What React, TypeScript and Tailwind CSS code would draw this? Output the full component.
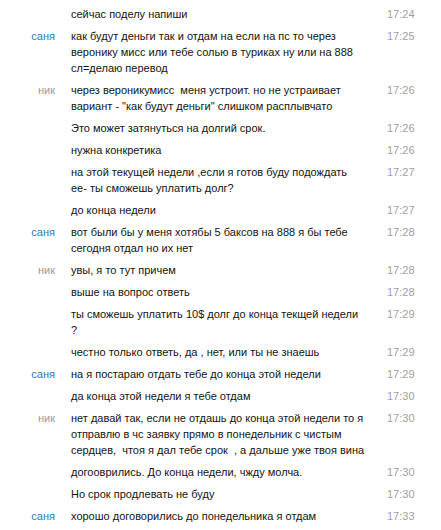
import React from "react";

type Row = { name?: string; who?: "s" | "n"; lines: string[]; time?: string };

const rows: Row[] = [
  { lines: ["сейчас поделу напиши"], time: "17:24" },
  {
    name: "саня",
    who: "s",
    lines: [
      "как будут деньги так и отдам на если на пс то через",
      "веронику мисс или тебе солью в туриках ну или на 888",
      "сл=делаю перевод",
    ],
    time: "17:25",
  },
  {
    name: "ник",
    who: "n",
    lines: [
      "через вероникумисс  меня устроит. но не устраивает",
      "вариант - \"как будут деньги\" слишком расплывчато",
    ],
    time: "17:26",
  },
  { lines: ["Это может затянуться на долгий срок."], time: "17:26" },
  { lines: ["нужна конкретика"], time: "17:26" },
  {
    lines: ["на этой текущей недели ,если я готов буду подождать", "ее- ты сможешь уплатить долг?"],
    time: "17:27",
  },
  { lines: ["до конца недели"], time: "17:27" },
  {
    name: "саня",
    who: "s",
    lines: ["вот были бы у меня хотябы 5 баксов на 888 я бы тебе", "сегодня отдал но их нет"],
    time: "17:28",
  },
  { name: "ник", who: "n", lines: ["увы, я то тут причем"], time: "17:28" },
  { lines: ["выше на вопрос ответь"], time: "17:28" },
  { lines: ["ты сможешь уплатить 10$ долг до конца текщей недели", "?"], time: "17:29" },
  { lines: ["честно только ответь, да , нет, или ты не знаешь"], time: "17:29" },
  { name: "саня", who: "s", lines: ["на я постараю отдать тебе до конца этой недели"], time: "17:29" },
  { lines: ["да конца этой недели я тебе отдам"], time: "17:30" },
  {
    name: "ник",
    who: "n",
    lines: [
      "нет давай так, если не отдашь до конца этой недели то я",
      "отправлю в чс заявку прямо в понедельник с чистым",
      "сердцев,  чтоя я дал тебе срок  , а дальше уже твоя вина",
    ],
    time: "17:30",
  },
  { lines: ["догооврились. До конца недели, чжду молча."], time: "17:30" },
  { lines: ["Но срок продлевать не буду"], time: "17:30" },
  { name: "саня", who: "s", lines: ["хорошо договорились до понедельника я отдам"], time: "17:33" },
];

export default function App() {
  return (
    <div
      className="w-[441px] h-[530px] bg-white pt-[3px] overflow-hidden text-[11px] leading-[16px]"
      style={{ fontFamily: "Tahoma, 'Liberation Sans', Arial, sans-serif" }}
    >
      {rows.map((r, i) => (
        <div key={i} className="flex py-[3px]">
          <div
            className={
              "w-[55px] text-right shrink-0 " +
              (r.who === "s" ? "text-[#2b78c5]" : "text-[#9a9a9a]")
            }
          >
            {r.name ?? ""}
          </div>
          <div className="ml-[16px] w-[316px] shrink-0 text-[#141414]">
            {r.lines.map((l, j) => (
              <div key={j} className="whitespace-pre">
                {l}
              </div>
            ))}
          </div>
          <div className="text-[#a0a0a0]">{r.time}</div>
        </div>
      ))}
    </div>
  );
}
